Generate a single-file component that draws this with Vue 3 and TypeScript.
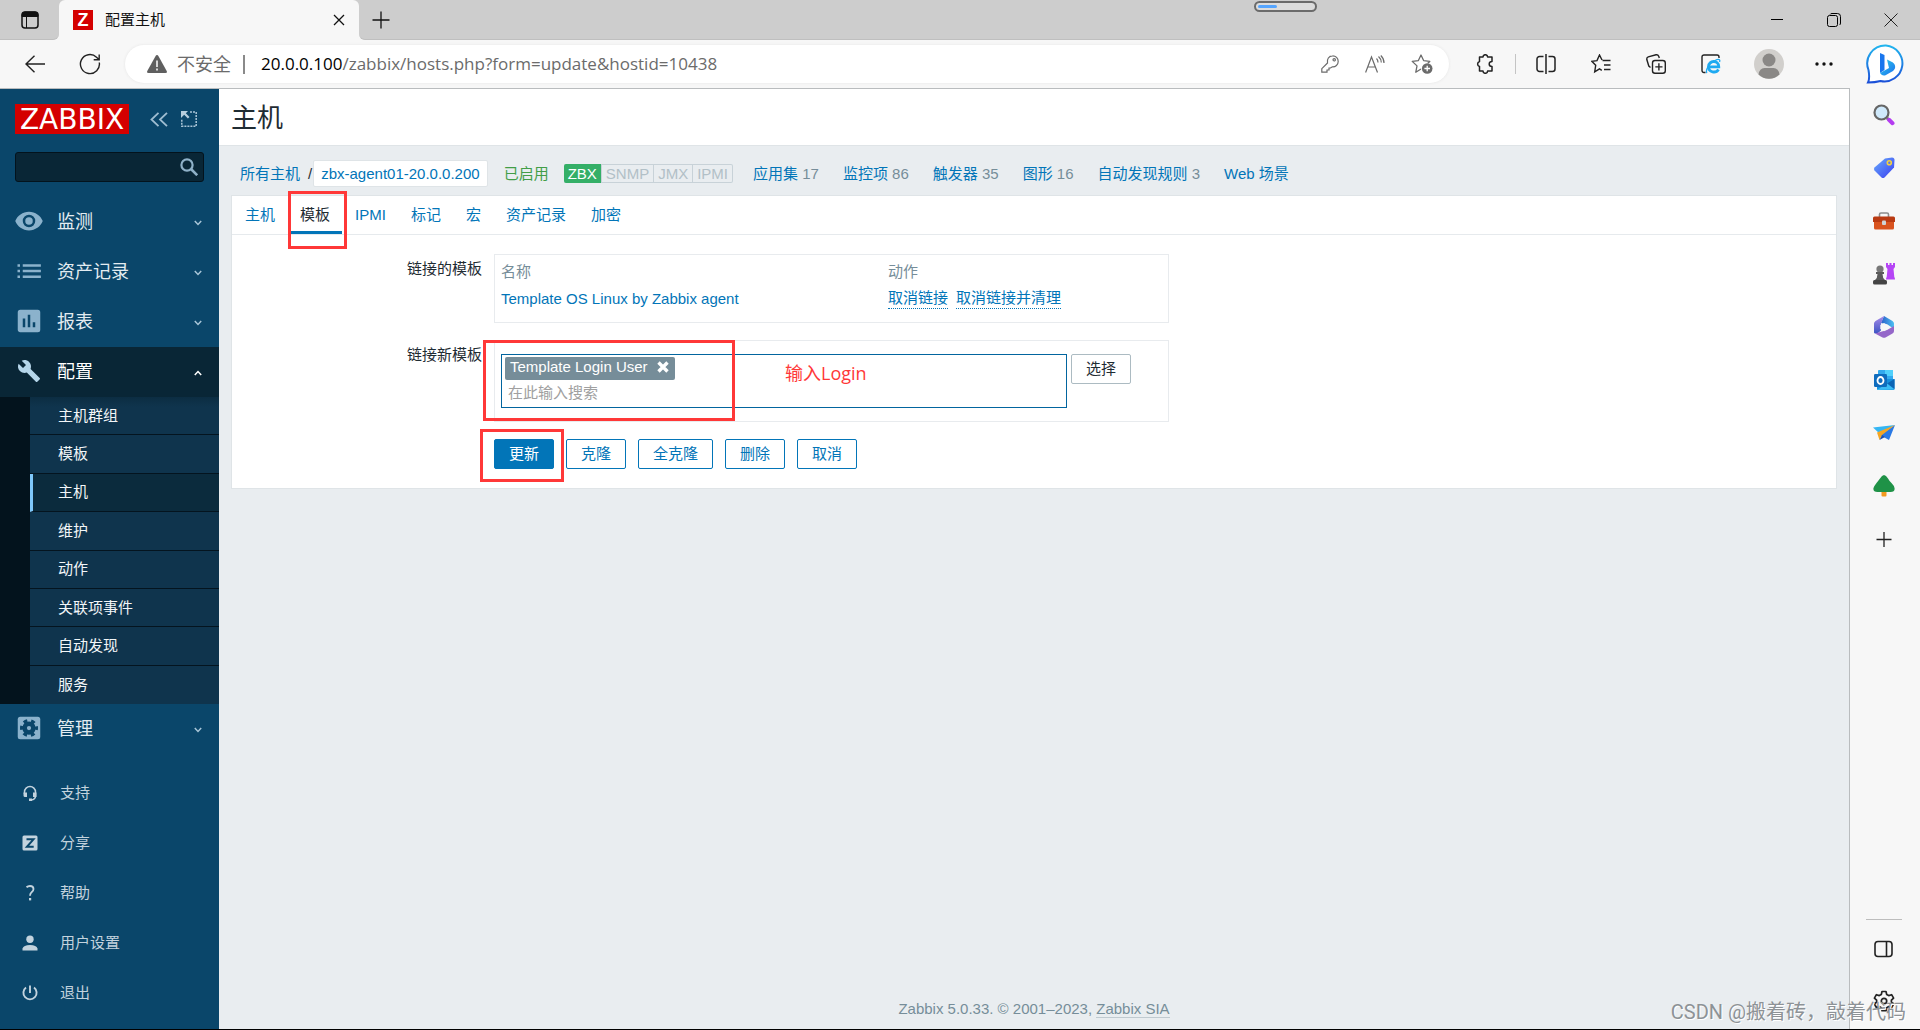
<script setup lang="ts">
import { ref } from 'vue'

interface MenuItem {
  label: string
  icon: string
}

const menuTop: MenuItem[] = [
  {
    label: '监测',
    icon: 'M12 4.5C7 4.5 2.7 7.6 1 12c1.7 4.4 6 7.5 11 7.5s9.3-3.1 11-7.5c-1.7-4.4-6-7.5-11-7.5zM12 17a5 5 0 1 1 0-10 5 5 0 0 1 0 10zm0-8a3 3 0 1 0 0 6 3 3 0 0 0 0-6z',
  },
  {
    label: '资产记录',
    icon: 'M2.8 6.5h2v2h-2zM2.8 11h2v2h-2zM2.8 15.5h2v2h-2zM7 6.5h14.5v2H7zM7 11h14.5v2H7zM7 15.5h14.5v2H7z',
  },
  {
    label: '报表',
    icon: 'M19 3H5a2 2 0 0 0-2 2v14c0 1.1.9 2 2 2h14a2 2 0 0 0 2-2V5a2 2 0 0 0-2-2zM9 17H7v-7h2v7zm4 0h-2V7h2v10zm4 0h-2v-4h2v4z',
  },
]

const configIcon =
  'M22.7 19l-9.1-9.1c.9-2.3.4-5-1.5-6.900-2-2-5-2.400-7.400-1.300L9 6 6 9 1.600 4.700C.4 7.100.9 10.100 2.900 12.100c1.900 1.900 4.600 2.400 6.900 1.500l9.100 9.100c.4.4 1 .4 1.400 0l2.300-2.300c.5-.4.5-1.100.1-1.400z'

const submenu = ['主机群组', '模板', '主机', '维护', '动作', '关联项事件', '自动发现', '服务']
const activeSub = '主机'

const userMenu = [
  { label: '支持', kind: 'support' },
  { label: '分享', kind: 'share' },
  { label: '帮助', kind: 'help' },
  { label: '用户设置', kind: 'user' },
  { label: '退出', kind: 'power' },
]

const entityLinks = [
  { label: '应用集', count: '17' },
  { label: '监控项', count: '86' },
  { label: '触发器', count: '35' },
  { label: '图形', count: '16' },
  { label: '自动发现规则', count: '3' },
  { label: 'Web 场景', count: '' },
]

const tabs = ['主机', '模板', 'IPMI', '标记', '宏', '资产记录', '加密']
const activeTab = ref('模板')
const search = ref('')
const templateQuery = ref('')
</script>

<template>
  <div class="window">
    <header class="tabstrip">
      <div class="strip-left">
        <button class="plain" aria-label="标签操作">
          <svg width="18" height="18" viewBox="0 0 18 18" fill="none" stroke="#111">
            <rect x="1" y="1" width="16" height="16" rx="3" stroke-width="1.5" />
            <path d="M1 4a3 3 0 0 1 3-3h10a3 3 0 0 1 3 3v1.500H1z" fill="#111" />
            <path d="M5.500 5v12" />
          </svg>
        </button>
      </div>
      <div class="tab-well">
        <div class="browser-tab">
          <span class="favicon">Z</span>
          <span class="tab-title">配置主机</span>
          <button class="plain" aria-label="关闭标签页">
            <svg width="12" height="12" viewBox="0 0 12 12" stroke="#111" stroke-width="1.3"><path d="M1 1l10 10M11 1L1 11" /></svg>
          </button>
        </div>
      </div>
      <div class="strip-right">
        <button class="plain" aria-label="新建标签页">
          <svg width="18" height="18" viewBox="0 0 18 18" stroke="#111" stroke-width="1.3"><path d="M9 .5v17M.5 9h17" /></svg>
        </button>
        <div class="pill"><span></span></div>
        <div class="win-controls">
          <button class="plain" aria-label="最小化">
            <svg width="14" height="14" viewBox="0 0 14 14" stroke="#000"><path d="M1 6.500h12" /></svg>
          </button>
          <button class="plain" aria-label="还原">
            <svg width="14" height="14" viewBox="0 0 14 14" fill="none" stroke="#000">
              <rect x=".5" y="2.500" width="10" height="11" rx="2" />
              <path d="M3 1.500Q3.500.5 5 .5h5.500a3 3 0 0 1 3 3V10q0 1.500-1 2" />
            </svg>
          </button>
          <button class="plain" aria-label="关闭">
            <svg width="14" height="14" viewBox="0 0 14 14" stroke="#222"><path d="M.5.5l13 13M13.500.5l-13 13" /></svg>
          </button>
        </div>
      </div>
    </header>

    <div class="toolbar">
      <button class="plain" aria-label="返回">
        <svg width="20" height="18" viewBox="0 0 20 18" fill="none" stroke="#222" stroke-width="1.4"><path d="M20 9H1M9.500.7L1 9l8.500 8.300" /></svg>
      </button>
      <button class="plain reload" aria-label="刷新">
        <svg width="22" height="22" viewBox="0 0 22 22" fill="none" stroke="#222" stroke-width="1.4">
          <path d="M20.300 9.500A9.500 9.500 0 1 1 17.500 4.200L20 6.500M20.200 1.500v5.300h-5.500" />
        </svg>
      </button>
      <div class="address">
        <svg width="20" height="18" viewBox="0 0 20 18"><path d="M10 0q.9 0 1.400.9l8.300 15q.9 2.100-1.200 2.100h-17q-2.100 0-1.200-2.100l8.300-15Q9.100 0 10 0z" fill="#5f5f5f" /><path d="M10 5.500v6.500M10 13.500v2" stroke="#fff" stroke-width="1.5" /></svg>
        <span class="insecure">不安全</span>
        <span class="bar"></span>
        <span class="url"><b>20.0.0.100</b>/zabbix/hosts.php?form=update&amp;hostid=10438</span>
        <span class="address-icons">
          <svg width="18" height="18" viewBox="0 0 18 18" fill="none" stroke="#6b6b6b" stroke-width="1.2">
            <path d="M11.500.8a5.500 5.500 0 0 1 5.700 5.700c0 3.200-2.700 5.600-5.900 5.300L9.500 13H8v2H6v2.200H.8v-3.500l5.700-5.700C5.600 4.200 8 .8 11.500.8z" /><circle cx="13.200" cy="4.800" r="1.200" />
          </svg>
          <svg width="20" height="18" viewBox="0 0 20 18" fill="none" stroke="#6b6b6b" stroke-width="1.2">
            <path d="M.6 17.500L6.500 2l6 15.500M2.700 12h7.700M11.500 3.500q1.500 1.500 1.500 4M13.500 1.500q2.800 2.500 2.800 6M15.800.5q3.200 3 3.200 7.500" />
          </svg>
          <svg width="22" height="20" viewBox="0 0 22 20" fill="none" stroke="#6b6b6b" stroke-width="1.3">
            <path d="M10 15l-5.200 3.200 1.200-6.300L1.200 7.400l6.200-.8L10 1l2.600 5.600 6.200.8-2 1.800" stroke-linejoin="round" /><circle cx="16.200" cy="14.500" r="5.300" fill="#6b6b6b" stroke="none" /><path d="M16.200 11.700v5.600M13.400 14.500H19" stroke="#fff" />
          </svg>
        </span>
      </div>
      <div class="tools">
        <svg width="20" height="20" viewBox="0 0 20 20" fill="none" stroke="#222" stroke-width="1.5" stroke-linejoin="round">
          <path d="M4.500 3H8a2.300 2.300 0 0 1 4.600 0H17v4.500c-1.600 0-2.800 1-2.800 2.500s1.200 2.500 2.800 2.500V17h-4.400a2.300 2.300 0 0 1-4.600 0H4.500v-4.500a2.600 2.600 0 0 1 0-5z" />
        </svg>
        <i class="tool-sep"></i>
        <svg width="20" height="20" viewBox="0 0 20 20" fill="none" stroke="#222" stroke-width="1.5">
          <path d="M7.500 2.500h-4A2.500 2.500 0 0 0 1 5v10a2.500 2.500 0 0 0 2.500 2.500h4M12.500 2.500h4A2.500 2.500 0 0 1 19 5v10a2.500 2.500 0 0 1-2.500 2.500h-4M10 0v20" />
        </svg>
        <svg width="20" height="20" viewBox="0 0 20 20" fill="none" stroke="#222" stroke-width="1.4">
          <path d="M11.500 6.500h8M13 11h6.500M13 15.500h6.500M11 6L8.500 1 6 6.600.8 7.300l3.900 4-1 6.600 4.800-3 2.300 1.500" />
        </svg>
        <svg width="20" height="20" viewBox="0 0 20 20" fill="none" stroke="#222" stroke-width="1.4">
          <rect x="6.500" y="6.500" width="12.800" height="12.800" rx="2.500" /><path d="M12.900 9.300v7.200M9.300 12.900h7.200M4.500 13.500L2.800 12 .8 5.500Q.5 3.500 2.300 2.800L10 .8q2-.4 2.700 1.400l.6 1.800" />
        </svg>
        <svg width="20" height="20" viewBox="0 0 20 20" fill="none">
          <path d="M4.500 18.500H3a2 2 0 0 1-2-2V3a2 2 0 0 1 2-2h13a2 2 0 0 1 2 2v1" stroke="#222" stroke-width="1.4" />
          <path d="M17.500 15.500c-2.500 4-10 3.200-10-3 0-6.700 10.300-6.700 10.300.3H8" stroke="#1eaaf1" stroke-width="2.800" /><path d="M6 19c-2-2.500 2-9.500 8-12.500 4-2 5.500-1 4.500 1.500" stroke="#1eaaf1" stroke-width="1.3" />
        </svg>
        <svg class="account" width="30" height="30" viewBox="0 0 30 30"><circle cx="15" cy="15" r="15" fill="#d1cfcc" /><circle cx="15" cy="11" r="6.500" fill="#8a8886" /><path d="M4.500 25.500q1-6.500 6-6.500h9q5 0 6 6.500a15 15 0 0 1-21 0z" fill="#8a8886" /></svg>
        <svg class="more" width="18" height="4" viewBox="0 0 18 4" fill="#111"><circle cx="2" cy="2" r="1.700" /><circle cx="9" cy="2" r="1.700" /><circle cx="16" cy="2" r="1.700" /></svg>
        <svg width="40" height="40" viewBox="0 0 40 40">
          <defs>
            <linearGradient id="bingRing" x1="0" y1="0" x2="0" y2="1"><stop offset="0" stop-color="#22b5ee" /><stop offset="1" stop-color="#1b4fd8" /></linearGradient>
            <linearGradient id="bingB" x1="0" y1="0" x2="1" y2="1"><stop offset="0" stop-color="#2fd0e8" /><stop offset="1" stop-color="#1a6ef0" /></linearGradient>
          </defs>
          <path d="M20 1.500A18 18 0 1 1 14.500 37Q9 38.500 2 38.500 4 34.500 2.500 26A18 18 0 0 1 20 1.500z" fill="#fff" stroke="url(#bingRing)" stroke-width="2" />
          <path d="M14 9l4.500 2v15L14 29z" fill="#1976ee" /><path d="M21 15.500l5.500 2.800c3.500 2.500 3.500 6.500.5 8.700l-7.500 4.200q-3 1.300-5.500-2.200l9-5-1-4z" fill="url(#bingB)" />
        </svg>
      </div>
    </div>

    <div class="body">
      <div class="page">
        <aside class="sidebar">
          <div class="brand">
            <a href="#" class="logo">ZABBIX</a>
            <button class="plain" aria-label="折叠侧栏">
              <svg width="18" height="15" viewBox="0 0 18 15" fill="none" stroke="#9fbdd1" stroke-width="1.8"><path d="M8.500.8L1.500 7.500l7 6.700M17 .8l-7 6.700 7 6.700" /></svg>
            </button>
            <button class="plain" aria-label="全屏">
              <svg width="16" height="16" viewBox="0 0 16 16" fill="none" stroke="#a9c4d6" stroke-width="1.5"><path d="M15.200 1v14.200H.8V8M9 1h6" stroke-dasharray="2 1" /><path d="M0 0h7L4.800 2.200l3.700 3.700-1.600 1.600-3.700-3.700L0 7z" fill="#b5cede" stroke="none" /></svg>
            </button>
          </div>
          <form class="search" @submit.prevent>
            <input v-model="search" type="text" aria-label="搜索" />
            <button class="plain" aria-label="搜索">
              <svg width="18" height="18" viewBox="0 0 18 18" fill="none" stroke="#8fb1c8" stroke-width="2.2"><circle cx="7" cy="7" r="5.600" /><path d="M11 11l6.200 6.200" stroke-width="2.6" /></svg>
            </button>
          </form>

          <nav class="menu">
            <a v-for="m in menuTop" :key="m.label" href="#" class="menu-item">
              <span class="menu-icon"><svg width="30" height="30" viewBox="0 0 24 24" fill="#8bb2cc" fill-rule="evenodd"><path :d="m.icon" /></svg></span>
              <span>{{ m.label }}</span>
              <svg class="chev" width="8" height="6" viewBox="0 0 8 6"><path d="M.8 1L4 4.500 7.200 1" /></svg>
            </a>
            <a href="#" class="menu-item open">
              <span class="menu-icon"><svg width="24" height="24" viewBox="0 0 24 24" fill="#b5d6ea"><path :d="configIcon" /></svg></span>
              <span>配置</span>
              <svg class="chev" width="8" height="6" viewBox="0 0 8 6"><path d="M.8 5L4 1.500 7.200 5" /></svg>
            </a>
            <div class="submenu">
              <a v-for="s in submenu" :key="s" href="#" :class="{ active: s === activeSub }">{{ s }}</a>
            </div>
            <a href="#" class="menu-item">
              <span class="menu-icon">
                <svg width="30" height="30" viewBox="0 0 24 24">
                  <rect x="3" y="3" width="18" height="18" rx="2" fill="#8bb2cc" />
                  <circle cx="12" cy="12" r="3.500" fill="none" stroke="#0a466a" stroke-width="3.6" />
                  <circle cx="12" cy="12" r="6" fill="none" stroke="#0a466a" stroke-width="2.4" stroke-dasharray="3.142 3.142" stroke-dashoffset="1.571" />
                </svg>
              </span>
              <span>管理</span>
              <svg class="chev" width="8" height="6" viewBox="0 0 8 6"><path d="M.8 1L4 4.500 7.200 1" /></svg>
            </a>
          </nav>

          <nav class="user-menu">
            <a v-for="u in userMenu" :key="u.kind" href="#">
              <svg width="16" height="16" viewBox="0 0 16 16" fill="#c3d3de">
                <template v-if="u.kind === 'support'">
                  <path d="M2.500 9V7a5.500 5.500 0 0 1 11 0v4q0 3.500-4.500 4" fill="none" stroke="#c3d3de" stroke-width="1.5" />
                  <path d="M1.500 7.500H5V12H3q-1.500 0-1.500-1.500zM11 7.500h3.500V12H11zM7 13.500h3V16H7z" />
                </template>
                <template v-else-if="u.kind === 'share'">
                  <rect x=".5" y=".5" width="15" height="15" rx="1.500" />
                  <path d="M4.500 4.300h7L4.900 11.800h6.800" fill="none" stroke="#0a466a" stroke-width="2" />
                </template>
                <template v-else-if="u.kind === 'help'">
                  <path d="M4.500 2.300Q6 1 8 1q3.500 0 3.500 3 0 1.700-1.700 3T8 10.800" fill="none" stroke="#c3d3de" stroke-width="1.8" />
                  <rect x="7" y="13" width="2.200" height="2.400" />
                </template>
                <template v-else-if="u.kind === 'user'">
                  <circle cx="8" cy="4.200" r="3.700" />
                  <path d="M.5 15.500v-2Q1.500 10 8 10t7.500 3.500v2z" />
                </template>
                <template v-else>
                  <path d="M4 2.500a6.600 6.600 0 1 0 8 0M8 .5V8" fill="none" stroke="#c3d3de" stroke-width="1.9" />
                </template>
              </svg>
              <span>{{ u.label }}</span>
            </a>
          </nav>
        </aside>

        <main class="main">
          <h1>主机</h1>
          <div class="crumbs">
            <a href="#">所有主机</a>
            <span class="slash">/</span>
            <a href="#" class="current">zbx-agent01-20.0.0.200</a>
            <span class="enabled">已启用</span>
            <span class="badges"><span class="on">ZBX</span><span>SNMP</span><span>JMX</span><span>IPMI</span></span>
            <span class="entities">
              <span v-for="e in entityLinks" :key="e.label"><a href="#">{{ e.label }}</a>{{ e.count ? ' ' + e.count : '' }}</span>
            </span>
          </div>

          <section class="card">
            <div class="tabs" role="tablist">
              <button v-for="t in tabs" :key="t" role="tab" :class="{ active: t === activeTab }" :aria-selected="t === activeTab" @click="activeTab = t">
                {{ t }}
                <i v-if="t === '模板'" class="mark mark-tab"></i>
              </button>
            </div>

            <form class="form" @submit.prevent>
              <div class="label">链接的模板</div>
              <div class="panel linked">
                <table>
                  <thead>
                    <tr><th>名称</th><th>动作</th></tr>
                  </thead>
                  <tbody>
                    <tr>
                      <td><a href="#">Template OS Linux by Zabbix agent</a></td>
                      <td class="actions"><button type="button">取消链接</button><button type="button">取消链接并清理</button></td>
                    </tr>
                  </tbody>
                </table>
              </div>

              <label class="label" for="add-template">链接新模板</label>
              <div class="panel adding">
                <div class="multiselect">
                  <span class="chip">Template Login User
                    <button type="button" class="plain" aria-label="移除">
                      <svg width="12" height="12" viewBox="0 0 12 12" stroke="#fff" stroke-width="3.4"><path d="M1.500 1.500l9 9M10.500 1.500l-9 9" /></svg>
                    </button>
                  </span>
                  <input id="add-template" v-model="templateQuery" type="text" placeholder="在此输入搜索" />
                  <span class="note">输入Login</span>
                </div>
                <button type="button" class="btn grey">选择</button>
                <i class="mark mark-input"></i>
              </div>

              <div class="buttons">
                <button type="submit" class="btn primary">更新</button>
                <button type="button" class="btn">克隆</button>
                <button type="button" class="btn">全克隆</button>
                <button type="button" class="btn">删除</button>
                <button type="button" class="btn">取消</button>
                <i class="mark mark-update"></i>
              </div>
            </form>
          </section>

          <footer>Zabbix 5.0.33. © 2001–2023, <a href="#">Zabbix SIA</a></footer>
        </main>
      </div>

      <aside class="rail">
        <svg width="22" height="22" viewBox="0 0 22 22"><path d="M14 14l1.500 1.500" stroke="#777" stroke-width="3" /><path d="M16 15.800l3.500 3.400" stroke="#b43cf0" stroke-width="4" stroke-linecap="round" /><circle cx="8.500" cy="8.500" r="7" fill="#cfe9fb" stroke="#666" stroke-width="2.2" /></svg>
        <svg width="22" height="22" viewBox="0 0 22 22">
          <defs><linearGradient id="tag" x1="0" y1="0" x2="1" y2="1"><stop offset="0" stop-color="#69aefc" /><stop offset="1" stop-color="#3a3cf0" /></linearGradient></defs>
          <path d="M12 1.500l7-1q2.500 0 2.500 2.500l-.5 7.500L11.500 20.500q-1.500 1.200-3 0l-7-7q-1.200-1.500 0-3z" fill="url(#tag)" /><circle cx="16.300" cy="5.800" r="2" fill="#5b7be8" stroke="#f6d13c" stroke-width="1.6" />
        </svg>
        <svg width="22" height="22" viewBox="0 0 22 22"><path d="M6.500 7V4.500Q6.500 3 8 3h6q1.500 0 1.500 1.500V7" fill="none" stroke="#8c8c8c" stroke-width="1.6" /><rect x="1" y="8" width="20" height="11.500" rx="1.500" fill="#d9531e" /><path d="M0 8q0-1.500 1.500-1.500h19Q22 6.500 22 8v4H0z" fill="#b93a12" /><rect x="9" y="10.500" width="4" height="4.500" rx="1" fill="#cfd3d6" /></svg>
        <svg width="22" height="22" viewBox="0 0 22 22"><path d="M13 0h2v2h1.500V0h2v2H20V0h2v4l-1.500 2 .8 8q.7.500.7 2.500h-9q0-2 .7-2.500l.8-8L13 4z" fill="#b545f5" /><circle cx="7" cy="6" r="3.600" fill="#777" /><path d="M3 9h8v2H9.500q0 4 2.500 6h-10q2.500-2 2.500-6H3z" fill="#5a5a5a" /><rect x="0" y="17" width="14" height="4.500" rx="1.500" fill="#444" /></svg>
        <svg width="22" height="22" viewBox="0 0 22 22">
          <defs><linearGradient id="m3a" x1="0" y1="0" x2="1" y2="0"><stop offset="0" stop-color="#2c5fc9" /><stop offset="1" stop-color="#4cc0f2" /></linearGradient><linearGradient id="m3b" x1="0" y1="0" x2="0" y2="1"><stop offset="0" stop-color="#a98be8" /><stop offset="1" stop-color="#3c55c4" /></linearGradient></defs>
          <path d="M11 0l8.500 5Q21 6 21 7.500V13l-6.500-4.500L8 7z" fill="url(#m3a)" /><path d="M11 0L2.500 5Q1 6 1 7.500v9q0 1.500 4 .5l3-2.500V7.500z" fill="url(#m3b)" /><path d="M2 17.500l7.500 4q1.500.7 3 0l7-4Q21 16.500 21 15v-5l-7 4z" fill="#9567c9" /><path d="M11 7l3.700 2v4L11 15.200 7.300 13V9z" fill="#f7f7f7" />
        </svg>
        <svg width="22" height="22" viewBox="0 0 22 22"><rect x="5" y="1" width="15" height="12" rx="1" fill="#32a9ee" /><path d="M12 1h8v6h-8z" fill="#50d0fb" /><path d="M4 10h17.500v10q0 1-1 1H5q-1 0-1-1z" fill="#1590df" /><path d="M21.500 10v10L14 14.500z" fill="#0b64b5" /><path d="M4 21l10-6.500 7.500 6z" fill="#3bbcf5" /><rect x="1" y="5" width="13" height="13" rx="1.200" fill="#0f6cbd" /><ellipse cx="7.500" cy="11.500" rx="3" ry="3.500" fill="none" stroke="#fff" stroke-width="1.8" /></svg>
        <svg width="22" height="22" viewBox="0 0 22 22"><path d="M0 5.500L22 3 7 12z" fill="#35b6f3" /><path d="M22 3L16 18l-9-5z" fill="#2a79e4" /><path d="M22 3L4 10.500 6.500 18 9 13z" fill="#f5a623" /><path d="M6.500 18L9 13l3 2z" fill="#1b4fae" /></svg>
        <svg width="22" height="22" viewBox="0 0 22 22"><rect x="8.500" y="15" width="5" height="6.500" rx="1" fill="#f29a1f" /><path d="M11 0q2 0 4 3.500 1 2 3.500 4.500t3 5q.8 4-4 4H4.500q-4.800 0-4-4 1-2.500 3-5T7 3.500Q9 0 11 0z" fill="#1f9247" /></svg>
        <svg width="22" height="22" viewBox="0 0 22 22" stroke="#222" stroke-width="1.3"><path d="M11 4v15M3.500 11.500h15" /></svg>
        <div class="rail-bottom">
          <svg width="20" height="18" viewBox="0 0 20 18" fill="none" stroke="#222" stroke-width="1.6"><rect x="1" y="1.500" width="17" height="15" rx="3" /><path d="M12.500 1.500v15" /></svg>
          <svg width="22" height="22" viewBox="0 0 22 22" fill="none" stroke="#222" stroke-width="1.7"><path d="M9 1.500h4l.7 3 2 1.100 2.900-.9 2 3.500-2.200 2v1.800l2.200 2-2 3.500-2.900-.9-2 1.100-.7 3H9l-.7-3-2-1.100-2.900.9-2-3.500 2.200-2v-1.800l-2.200-2 2-3.500 2.900.9 2-1.100z" stroke-linejoin="round" /><circle cx="11" cy="11" r="2.700" /></svg>
        </div>
      </aside>
    </div>
    <div class="watermark">CSDN @搬着砖，敲着代码</div>
  </div>
</template>

<style>
body {
  margin: 0;
}
</style>

<style scoped>
.window {
  position: relative;
  display: flex;
  flex-direction: column;
  min-height: 100vh;
  box-sizing: border-box;
  border-bottom: 1px solid #000;
  background: #f7f7f7;
  font: 15px/20px 'Liberation Sans', 'Noto Sans CJK SC', sans-serif;
  color: #1f2c33;
}
.window * {
  box-sizing: border-box;
}
svg {
  display: block;
  flex: none;
}
a {
  color: #0275b8;
  text-decoration: none;
}
button,
input {
  font: inherit;
}
button {
  cursor: pointer;
}
.plain {
  display: flex;
  padding: 0;
  border: 0;
  background: none;
}

/* tab strip */
.tabstrip {
  display: flex;
  height: 40px;
}
.strip-left,
.strip-right {
  display: flex;
  align-items: center;
  background: #cdcdcd;
  border-bottom: 1px solid #bfbfbf;
}
.strip-left {
  width: 59px;
  padding-left: 21px;
  border-bottom-right-radius: 6px;
}
.strip-right {
  position: relative;
  flex: 1;
  justify-content: space-between;
  padding: 0 22px 0 13px;
  border-bottom-left-radius: 6px;
}
.tab-well {
  width: 300px;
  background: linear-gradient(#cdcdcd 50%, #f7f7f7 50%);
}
.browser-tab {
  display: flex;
  align-items: center;
  height: 40px;
  padding: 0 14px;
  border-radius: 6px 6px 0 0;
  background: #f7f7f7;
}
.favicon {
  width: 20px;
  height: 20px;
  background: #d40000;
  color: #fff;
  font-weight: 700;
  font-size: 18px;
  text-align: center;
}
.tab-title {
  flex: 1;
  margin-left: 12px;
  color: #111;
}
.pill {
  position: absolute;
  top: 1px;
  left: 895px;
  width: 63px;
  height: 11px;
  padding: 2px;
  border: 2px solid #6b6b6b;
  border-radius: 6px;
  background: #dcdcdc;
}
.pill span {
  display: block;
  width: 19px;
  height: 3px;
  border-radius: 2px;
  background: #55a5ff;
}
.win-controls {
  display: flex;
  gap: 43px;
}

/* toolbar */
.toolbar {
  display: flex;
  align-items: center;
  height: 48px;
  padding: 0 14px 0 25px;
}
.reload {
  margin-left: 34px;
}
.address {
  display: flex;
  align-items: center;
  flex: 1;
  height: 38px;
  margin-left: 24px;
  padding: 0 16px 0 22px;
  border-radius: 19px;
  background: #fff;
  box-shadow: 0 0 3px #e4e4e4;
  font: 17px/24px 'Open Sans', 'Noto Sans CJK SC', sans-serif;
  color: #6b6b6b;
}
.insecure {
  margin-left: 10px;
  font-size: 18px;
}
.bar {
  width: 2px;
  height: 19px;
  margin: 0 16px 0 12px;
  background: #8a8a8a;
}
.url b {
  font-weight: 400;
  color: #000;
}
.address-icons {
  display: flex;
  align-items: center;
  gap: 26px;
  margin-left: auto;
}
.tools {
  display: flex;
  align-items: center;
  gap: 35px;
  margin-left: 26px;
}
.tool-sep {
  width: 1px;
  height: 20px;
  margin: 0 -15px;
  background: #c4c4c4;
}
.account,
.more {
  margin: 0 -2px;
}

/* body */
.body {
  display: flex;
  flex: 1;
}
.page {
  display: flex;
  flex: 1;
  border: solid #b9bcbe;
  border-width: 1px 1px 0 0;
  background: #e9edf0;
}
.sidebar {
  display: flex;
  flex-direction: column;
  width: 219px;
  background: #0a466a;
}
.brand {
  display: flex;
  align-items: center;
  gap: 13px;
  padding: 15px 15px 0;
}
.logo {
  width: 114px;
  height: 30px;
  margin-right: 8px;
  background: #d40000;
  color: #fff;
  font: 28px/31px 'DejaVu Sans', sans-serif;
  text-align: center;
}
.search {
  display: flex;
  align-items: center;
  height: 30px;
  margin: 18px 15px 15px;
  padding-right: 5px;
  border: 1px solid #03131d;
  border-radius: 3px;
  background: #092636;
}
.search input {
  flex: 1;
  min-width: 0;
  border: 0;
  outline: 0;
  background: none;
  color: #fff;
}
.menu-item {
  display: flex;
  align-items: center;
  height: 50px;
  padding-right: 17px;
  color: #e3ecf1;
  font-size: 18px;
}
.menu-item.open {
  background: #092636;
  color: #fff;
}
.menu-icon {
  display: flex;
  justify-content: center;
  width: 57px;
}
.menu-item svg {
  margin-bottom: 3px;
}
.menu-item .chev {
  margin: 1px 0 0 auto;
  fill: none;
  stroke: #a9c6d8;
  stroke-width: 1.5;
}
.open .chev {
  stroke: #fff;
}
.submenu {
  display: grid;
  grid-auto-rows: 1fr;
  height: 307px;
  padding-left: 30px;
  background: #03131d;
}
.submenu a {
  display: flex;
  align-items: center;
  padding-left: 28px;
  border-bottom: 1px solid #04141f;
  background: #0f344d;
  color: #f2f6f8;
}
.submenu a:first-child {
  background: linear-gradient(#0c2d42, #0f344d 10px);
}
.submenu a:last-child {
  border-bottom: 0;
}
.submenu a.active {
  padding-left: 25px;
  border-left: 3px solid #7fc8fb;
  background: #0b2b3d;
}
.user-menu {
  margin-top: auto;
  padding-bottom: 11px;
}
.user-menu a {
  display: flex;
  align-items: center;
  gap: 22px;
  height: 50px;
  padding-left: 22px;
  color: #c3d3de;
}

/* main */
.main {
  display: flex;
  flex: 1;
  flex-direction: column;
  min-width: 0;
}
h1 {
  margin: 0;
  height: 57px;
  padding: 0 12px;
  border-bottom: 1px solid #dfe4e7;
  background: #fff;
  font-size: 26px;
  font-weight: 400;
  line-height: 58px;
}
.crumbs {
  display: flex;
  align-items: center;
  height: 49px;
  padding: 6px 21px 0;
  white-space: nowrap;
}
.slash {
  margin: 0 1px 0 8px;
}
.current {
  height: 27px;
  padding: 0 7px;
  border: 1px solid #dfe4e7;
  border-radius: 2px;
  background: #fff;
  line-height: 26px;
}
.enabled {
  margin: 0 15px 0 16px;
  color: #429e47;
}
.badges {
  display: flex;
  border: 1px solid #c8d2d8;
  border-left: 0;
  border-radius: 2px;
  color: #b2c0c7;
  line-height: 17px;
}
.badges span {
  padding: 0 4px;
  border-left: 1px solid #c8d2d8;
}
.badges .on {
  margin: -1px 0;
  border: 0;
  border-radius: 2px 0 0 2px;
  background: #34af67;
  color: #fff;
  line-height: 19px;
}
.entities {
  display: flex;
  gap: 24px;
  margin-left: 20px;
  color: #768d99;
}
.card {
  margin: 0 12px;
  border: 1px solid #dfe4e7;
  background: #fff;
}
.tabs {
  display: flex;
  gap: 1px;
  height: 39px;
  padding-left: 1px;
  border-bottom: 1px solid #e6eaed;
}
.tabs button {
  position: relative;
  padding: 0 12px;
  border: 0;
  background: none;
  color: #0275b8;
  line-height: 38px;
}
.tabs button.active {
  color: #1f2c33;
  box-shadow: inset 0 -3px #0275b8;
}
.mark {
  position: absolute;
  border: 3px solid #ff3838;
  pointer-events: none;
}
.mark-tab {
  top: -5px;
  left: 0;
  width: 59px;
  height: 58px;
}
.form {
  display: grid;
  grid-template-columns: 250px minmax(0, 675px);
  column-gap: 12px;
  row-gap: 17px;
  padding: 19px 0;
}
.label {
  padding-top: 5px;
  text-align: right;
}
.panel {
  position: relative;
  border: 1px solid #e8ebee;
}
.linked {
  height: 69px;
  padding: 3px 6px;
}
table {
  width: 100%;
  border-collapse: collapse;
  table-layout: fixed;
}
th,
td {
  height: 27px;
  padding: 0;
  text-align: left;
  font-weight: 400;
}
th {
  color: #768d99;
}
th:first-child {
  width: 387px;
}
.actions button {
  margin-right: 8px;
  padding: 0;
  border: 0;
  border-bottom: 1px dotted #0275b8;
  background: none;
  color: #0275b8;
  line-height: 20px;
}
.adding {
  display: flex;
  align-items: flex-start;
  gap: 4px;
  height: 82px;
  padding: 13px 6px;
}
.multiselect {
  position: relative;
  display: flex;
  flex-direction: column;
  align-items: flex-start;
  width: 566px;
  height: 54px;
  padding: 2px 3px;
  border: 1px solid #02659f;
}
.chip {
  display: flex;
  align-items: center;
  gap: 9px;
  height: 23px;
  padding: 0 6px 2px 5px;
  border-radius: 2px;
  background: #768d99;
  color: #fff;
}
.multiselect input {
  width: 100%;
  height: 26px;
  padding: 0 3px;
  border: 0;
  outline: 0;
  background: none;
}
.multiselect input::placeholder {
  color: #a0a0a0;
}
.note {
  position: absolute;
  top: 6px;
  left: 283px;
  color: #ff3838;
  font: 18px/24px 'Open Sans', 'Noto Sans CJK SC', sans-serif;
}
.mark-input {
  top: -1px;
  left: -12px;
  width: 252px;
  height: 81px;
}
.btn {
  height: 30px;
  padding: 0 14px;
  border: 1px solid #0275b8;
  border-radius: 2px;
  background: #fff;
  color: #0275b8;
}
.btn.grey {
  border-color: #acbbc2;
  color: #1f2c33;
}
.btn.primary {
  background: #0275b8;
  color: #fff;
}
.buttons {
  position: relative;
  display: flex;
  grid-column: 2;
  gap: 12px;
}
.mark-update {
  top: -10px;
  left: -14px;
  width: 84px;
  height: 53px;
}
footer {
  margin-top: auto;
  padding-bottom: 10px;
  color: #768d99;
  text-align: center;
}
footer a {
  border-bottom: 1px solid #c0cad0;
  color: #768d99;
}

/* right rail */
.rail {
  display: flex;
  flex-direction: column;
  align-items: center;
  gap: 31px;
  width: 70px;
  padding: 16px 2px 0 0;
}
.rail-bottom {
  display: flex;
  flex-direction: column;
  align-items: center;
  gap: 32px;
  width: 36px;
  margin-top: auto;
  padding: 20px 0 17px;
  border-top: 1px solid #bdbdbd;
}
.watermark {
  position: absolute;
  right: 14px;
  bottom: 3px;
  color: #8d9296;
  font: 20px/28px Roboto, 'Noto Sans CJK SC', sans-serif;
  text-shadow: 1px 1px #fff;
}
</style>
